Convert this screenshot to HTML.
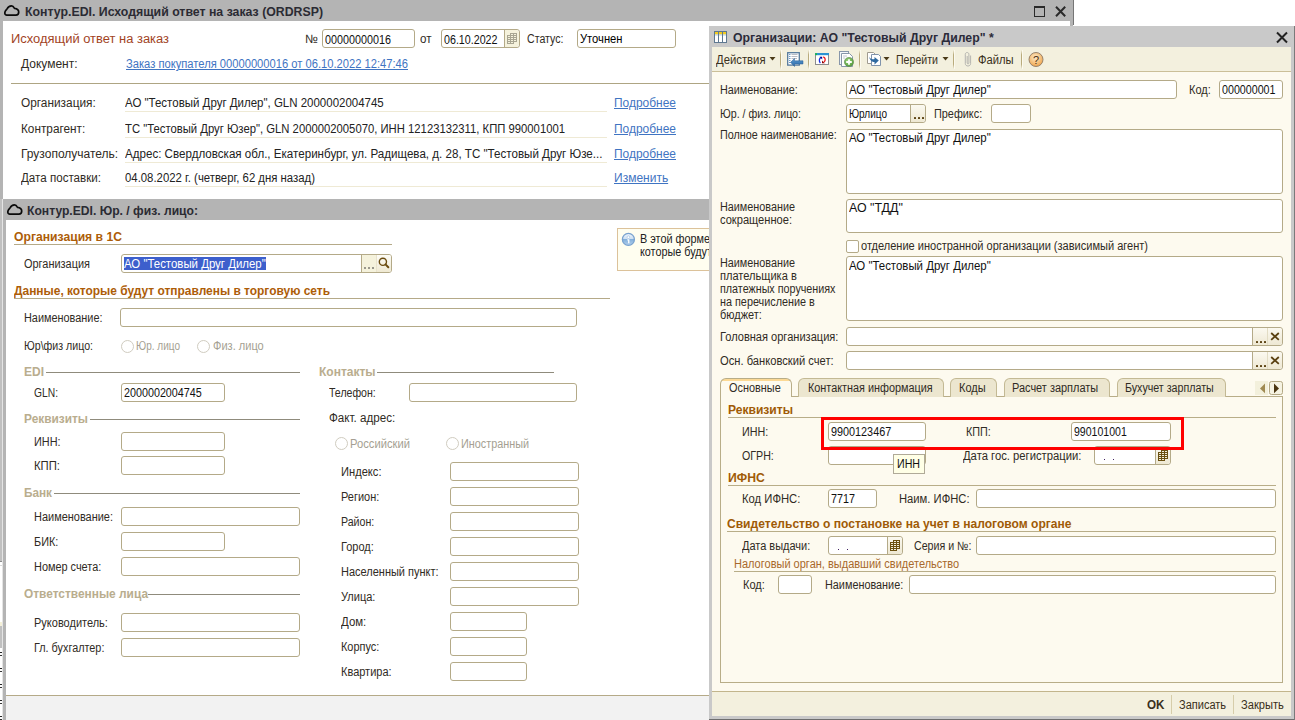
<!DOCTYPE html><html><head><meta charset='utf-8'><style>*{margin:0;padding:0}html,body{width:1295px;height:720px;overflow:hidden;background:#fff}
.t{position:absolute;white-space:pre;font-family:'Liberation Sans', sans-serif;transform-origin:0 0}
.r{position:absolute;box-sizing:border-box}</style></head><body><div class='r' style='left:0px;top:0px;width:1073px;height:200px;background:#b4b4b4;'></div><div class='r' style='left:1073px;top:0px;width:1px;height:25px;background:#767676;'></div><div class='r' style='left:3px;top:21px;width:1067px;height:179px;background:#ffffff;'></div><svg class='r' style='left:0px;top:0px' width='24' height='20' viewBox='0 0 24 20'><path d='M6.6 15.2 C5 15.2 4.6 13.6 4.9 12.2 C5.2 10.8 6.2 9.9 7 9 C8 6.9 9.6 5.9 11.5 5.9 C12.9 5.9 13.8 7 14.5 8.3 C17.2 8.6 18.7 10.2 18.7 12.1 C18.7 14 17.5 15.2 15.9 15.2 Z' fill='none' stroke='#0a0a0a' stroke-width='1.7' stroke-linejoin='round'/></svg><div class='t' style='left:25px;top:6px;font-size:12px;line-height:12px;color:#2b2b33;font-weight:bold;transform:scaleX(1.0258);'>Контур.EDI. Исходящий ответ на заказ (ORDRSP)</div><div class='r' style='left:1034px;top:6px;width:11px;height:11px;border:1.6px solid #2a2a2a;box-sizing:border-box;border-top-width:2.6px;'></div><svg class='r' style='left:1054px;top:5px' width='14' height='13' viewBox='0 0 14 13'><path d='M2 1.8 L11.2 11.2 M11.2 1.8 L2 11.2' stroke='#2a2a2a' stroke-width='2'/></svg><div class='t' style='left:11px;top:33px;font-size:12px;line-height:12px;color:#a2441f;transform:scaleX(1.0775);'>Исходящий ответ на заказ</div><div class='t' style='left:305px;top:33px;font-size:12px;line-height:12px;color:#302b24;transform:scaleX(1.0097);'>№</div><div class='r' style='left:322px;top:29px;width:93px;height:19px;background:#fff;border:1px solid #b4aa88;box-sizing:border-box;border-radius:3px;'></div><div class='t' style='left:325px;top:34px;font-size:12px;line-height:12px;color:#111;transform:scaleX(0.8989);'>00000000016</div><div class='t' style='left:420px;top:33px;font-size:12px;line-height:12px;color:#302b24;transform:scaleX(0.9659);'>от</div><div class='r' style='left:441px;top:29px;width:79px;height:19px;background:#fff;border:1px solid #b4aa88;box-sizing:border-box;border-radius:3px;'></div><div class='r' style='left:504px;top:30px;width:15px;height:17px;background:#f5f2dc;border-left:1px solid #b4aa88;border-radius:0 3px 3px 0;'></div><svg class='r' style='left:507px;top:33px' width='10' height='11' viewBox='0 0 10 11'><path d='M3 0 H10 V9 H7 V11 H0 V2 H3 Z' fill='#a8a592'/><rect x='4' y='1' width='2' height='1' fill='#f5f2dc'/><rect x='7' y='1' width='2' height='1' fill='#f5f2dc'/><rect x='1' y='3' width='2' height='1' fill='#f5f2dc'/><rect x='4' y='3' width='2' height='1' fill='#f5f2dc'/><rect x='7' y='3' width='2' height='1' fill='#f5f2dc'/><rect x='1' y='5' width='2' height='1' fill='#f5f2dc'/><rect x='4' y='5' width='2' height='1' fill='#f5f2dc'/><rect x='7' y='5' width='2' height='1' fill='#f5f2dc'/><rect x='1' y='7' width='2' height='1' fill='#f5f2dc'/><rect x='4' y='7' width='2' height='1' fill='#f5f2dc'/><rect x='7' y='7' width='2' height='1' fill='#f5f2dc'/><rect x='1' y='9' width='2' height='1' fill='#f5f2dc'/><rect x='4' y='9' width='2' height='1' fill='#f5f2dc'/></svg><div class='t' style='left:444px;top:34px;font-size:12px;line-height:12px;color:#111;transform:scaleX(0.8907);'>06.10.2022</div><div class='t' style='left:527px;top:33px;font-size:12px;line-height:12px;color:#302b24;transform:scaleX(0.8842);'>Статус:</div><div class='r' style='left:577px;top:29px;width:99px;height:19px;background:#fff;border:1px solid #b4aa88;box-sizing:border-box;border-radius:3px;'></div><div class='t' style='left:580px;top:33px;font-size:12px;line-height:12px;color:#000;transform:scaleX(0.9325);'>Уточнен</div><div class='t' style='left:21px;top:58px;font-size:12px;line-height:12px;color:#302b24;'>Документ:</div><div class='t' style='left:126px;top:58px;font-size:12px;line-height:12px;color:#3f74c2;text-decoration:underline;transform:scaleX(0.9312);'>Заказ покупателя 00000000016 от 06.10.2022 12:47:46</div><div class='r' style='left:11px;top:83px;width:698px;height:1px;background:#aea583;'></div><div class='t' style='left:21px;top:97px;font-size:12px;line-height:12px;color:#302b24;transform:scaleX(0.9872);'>Организация:</div><div class='t' style='left:125px;top:97px;font-size:12px;line-height:12px;color:#222;transform:scaleX(0.9572);'>АО "Тестовый Друг Дилер", GLN 2000002004745</div><div class='r' style='left:125px;top:111px;width:482px;height:1px;background:#efead5;'></div><div class='t' style='left:614px;top:97px;font-size:12px;line-height:12px;color:#3f74c2;text-decoration:underline;transform:scaleX(0.9962);'>Подробнее</div><div class='t' style='left:21px;top:123px;font-size:12px;line-height:12px;color:#302b24;transform:scaleX(0.9826);'>Контрагент:</div><div class='t' style='left:125px;top:123px;font-size:12px;line-height:12px;color:#222;transform:scaleX(0.9408);'>ТС "Тестовый Друг Юзер", GLN 2000002005070, ИНН 12123132311, КПП 990001001</div><div class='r' style='left:125px;top:137px;width:482px;height:1px;background:#efead5;'></div><div class='t' style='left:614px;top:123px;font-size:12px;line-height:12px;color:#3f74c2;text-decoration:underline;transform:scaleX(0.9962);'>Подробнее</div><div class='t' style='left:21px;top:148px;font-size:12px;line-height:12px;color:#302b24;'>Грузополучатель:</div><div class='t' style='left:125px;top:148px;font-size:12px;line-height:12px;color:#222;transform:scaleX(0.9658);'>Адрес: Свердловская обл., Екатеринбург, ул. Радищева, д. 28, ТС "Тестовый Друг Юзе...</div><div class='r' style='left:125px;top:162px;width:482px;height:1px;background:#efead5;'></div><div class='t' style='left:614px;top:148px;font-size:12px;line-height:12px;color:#3f74c2;text-decoration:underline;transform:scaleX(0.9962);'>Подробнее</div><div class='t' style='left:21px;top:172px;font-size:12px;line-height:12px;color:#302b24;transform:scaleX(0.9664);'>Дата поставки:</div><div class='t' style='left:125px;top:172px;font-size:12px;line-height:12px;color:#222;transform:scaleX(0.9469);'>04.08.2022 г. (четверг, 62 дня назад)</div><div class='r' style='left:125px;top:186px;width:482px;height:1px;background:#efead5;'></div><div class='t' style='left:614px;top:172px;font-size:12px;line-height:12px;color:#3f74c2;text-decoration:underline;'>Изменить</div><div class='r' style='left:0px;top:199px;width:2px;height:521px;background:#ffffff;'></div><div class='r' style='left:0px;top:199px;width:2px;height:362px;background:#c0c0c0;'></div><div class='r' style='left:0px;top:561px;width:2px;height:1px;background:#8a8a8a;'></div><div class='r' style='left:0px;top:565px;width:2px;height:1px;background:#d8d8d8;'></div><div class='r' style='left:0px;top:622px;width:2px;height:4px;background:#f4f0d8;'></div><div class='r' style='left:0px;top:626px;width:2px;height:22px;background:#c0c0c0;'></div><div class='r' style='left:0px;top:652px;width:2px;height:1px;background:#222222;'></div><div class='r' style='left:0px;top:655px;width:2px;height:1px;background:#333333;'></div><div class='r' style='left:0px;top:668px;width:2px;height:1px;background:#222222;'></div><div class='r' style='left:0px;top:671px;width:2px;height:1px;background:#333333;'></div><div class='r' style='left:0px;top:684px;width:2px;height:1px;background:#222222;'></div><div class='r' style='left:0px;top:687px;width:2px;height:1px;background:#333333;'></div><div class='r' style='left:0px;top:700px;width:2px;height:1px;background:#222222;'></div><div class='r' style='left:0px;top:703px;width:2px;height:1px;background:#333333;'></div><div class='r' style='left:0px;top:716px;width:2px;height:1px;background:#222222;'></div><div class='r' style='left:0px;top:719px;width:2px;height:1px;background:#333333;'></div><div class='r' style='left:2px;top:199px;width:1px;height:521px;background:#e4e4e4;'></div><div class='r' style='left:3px;top:199px;width:709px;height:521px;background:#b4b4b4;'></div><div class='r' style='left:6px;top:220px;width:706px;height:475px;background:#ffffff;'></div><div class='r' style='left:6px;top:695px;width:706px;height:1px;background:#b5aa88;'></div><div class='r' style='left:6px;top:696px;width:706px;height:24px;background:#f2f2f2;'></div><svg class='r' style='left:3px;top:199px' width='24' height='20' viewBox='0 0 24 20'><path d='M6.6 15.2 C5 15.2 4.6 13.6 4.9 12.2 C5.2 10.8 6.2 9.9 7 9 C8 6.9 9.6 5.9 11.5 5.9 C12.9 5.9 13.8 7 14.5 8.3 C17.2 8.6 18.7 10.2 18.7 12.1 C18.7 14 17.5 15.2 15.9 15.2 Z' fill='none' stroke='#0a0a0a' stroke-width='1.7' stroke-linejoin='round'/></svg><div class='t' style='left:27px;top:205px;font-size:12px;line-height:12px;color:#2b2b33;font-weight:bold;transform:scaleX(1.0107);'>Контур.EDI. Юр. / физ. лицо:</div><div class='t' style='left:14px;top:231px;font-size:12px;line-height:12px;color:#ad5d08;font-weight:bold;transform:scaleX(1.0132);'>Организация в 1С</div><div class='r' style='left:14px;top:244px;width:378px;height:1px;background:#b5aa88;'></div><div class='t' style='left:24px;top:258px;font-size:12px;line-height:12px;color:#302b24;transform:scaleX(0.9119);'>Организация</div><div class='r' style='left:121px;top:254px;width:271px;height:19px;background:#fff;border:1px solid #b4aa88;box-sizing:border-box;border-radius:3px;'></div><div class='r' style='left:361px;top:255px;width:15px;height:17px;background:#f5f2dc;border-left:1px solid #b4aa88;'></div><div class='r' style='left:364px;top:267px;width:2px;height:2px;background:#9a988c;'></div><div class='r' style='left:368px;top:267px;width:2px;height:2px;background:#9a988c;'></div><div class='r' style='left:372px;top:267px;width:2px;height:2px;background:#9a988c;'></div><div class='r' style='left:376px;top:255px;width:15px;height:17px;background:linear-gradient(#fdfcf6,#efe9d2);border-left:1px solid #e8e2cc;border-radius:0 2px 2px 0;'></div><svg class='r' style='left:376px;top:255px' width='15' height='17' viewBox='0 0 15 17'><circle cx='6.9' cy='6.8' r='3.6' fill='none' stroke='#6b4c10' stroke-width='1.4'/><path d='M9.5 9.4 L12.3 12.2' stroke='#6b4c10' stroke-width='2' stroke-linecap='round'/></svg><div class='r' style='left:124px;top:257px;width:142px;height:13px;background:#3d5fcc;'></div><div class='t' style='left:124px;top:258px;font-size:12px;line-height:12px;color:#ffffff;transform:scaleX(0.9517);'>АО "Тестовый Друг Дилер"</div><div class='t' style='left:14px;top:285px;font-size:12px;line-height:12px;color:#ad5d08;font-weight:bold;transform:scaleX(0.9948);'>Данные, которые будут отправлены в торговую сеть</div><div class='r' style='left:14px;top:298px;width:596px;height:1px;background:#b5aa88;'></div><div class='t' style='left:24px;top:312px;font-size:12px;line-height:12px;color:#302b24;transform:scaleX(0.9072);'>Наименование:</div><div class='r' style='left:120px;top:308px;width:457px;height:19px;background:#fff;border:1px solid #b4aa88;box-sizing:border-box;border-radius:3px;'></div><div class='t' style='left:24px;top:340px;font-size:12px;line-height:12px;color:#302b24;transform:scaleX(0.8846);'>Юр\физ лицо:</div><div class='r' style='left:121px;top:340px;width:13px;height:13px;border:1px solid #d0ccc0;border-radius:50%;box-sizing:border-box;background:#fff'></div><div class='t' style='left:136px;top:340px;font-size:12px;line-height:12px;color:#a59f92;transform:scaleX(0.8366);'>Юр. лицо</div><div class='r' style='left:197px;top:340px;width:13px;height:13px;border:1px solid #d0ccc0;border-radius:50%;box-sizing:border-box;background:#fff'></div><div class='t' style='left:213px;top:340px;font-size:12px;line-height:12px;color:#a59f92;transform:scaleX(0.9206);'>Физ. лицо</div><div class='r' style='left:617px;top:228px;width:95px;height:43px;background:#fffef0;border:1px solid #dcc29a;box-sizing:border-box;'></div><svg class='r' style='left:621px;top:232px' width='15' height='15' viewBox='0 0 15 15'><defs><linearGradient id='ig' x1='0' y1='0' x2='0' y2='1'><stop offset='0' stop-color='#eef5fc'/><stop offset='0.45' stop-color='#cfe0f2'/><stop offset='0.5' stop-color='#82b0dc'/><stop offset='1' stop-color='#b4d0ec'/></linearGradient></defs><circle cx='7.4' cy='7.4' r='6' fill='url(#ig)' stroke='#79a2cf' stroke-width='1.3'/><circle cx='7.4' cy='5.2' r='1.3' fill='#fff' stroke='#8fb4dc' stroke-width='0.5'/><path d='M6.3 7.3 H8.4 V11.3 H7.1 V8.4 H6.3 Z' fill='#fff'/></svg><div class='t' style='left:640px;top:233px;font-size:12px;line-height:12px;color:#222;transform:scaleX(0.9053);'>В этой форме указываются</div><div class='t' style='left:640px;top:246px;font-size:12px;line-height:12px;color:#222;transform:scaleX(0.9002);'>которые будут отправлены</div><div class='t' style='left:24px;top:366px;font-size:12px;line-height:12px;color:#b9ad8e;font-weight:bold;'>EDI</div><div class='r' style='left:46px;top:372px;width:254px;height:1px;background:#8f8b7c;'></div><div class='t' style='left:34px;top:387px;font-size:12px;line-height:12px;color:#302b24;transform:scaleX(0.8567);'>GLN:</div><div class='r' style='left:121px;top:383px;width:104px;height:19px;background:#fff;border:1px solid #b4aa88;box-sizing:border-box;border-radius:3px;'></div><div class='t' style='left:124px;top:387px;font-size:12px;line-height:12px;color:#111;transform:scaleX(0.8961);'>2000002004745</div><div class='t' style='left:24px;top:413px;font-size:12px;line-height:12px;color:#b9ad8e;font-weight:bold;transform:scaleX(0.9906);'>Реквизиты</div><div class='r' style='left:90px;top:419px;width:210px;height:1px;background:#8f8b7c;'></div><div class='t' style='left:34px;top:436px;font-size:12px;line-height:12px;color:#302b24;transform:scaleX(0.9045);'>ИНН:</div><div class='r' style='left:121px;top:432px;width:104px;height:19px;background:#fff;border:1px solid #b4aa88;box-sizing:border-box;border-radius:3px;'></div><div class='t' style='left:34px;top:460px;font-size:12px;line-height:12px;color:#302b24;transform:scaleX(0.9428);'>КПП:</div><div class='r' style='left:121px;top:456px;width:104px;height:19px;background:#fff;border:1px solid #b4aa88;box-sizing:border-box;border-radius:3px;'></div><div class='t' style='left:24px;top:487px;font-size:12px;line-height:12px;color:#b9ad8e;font-weight:bold;transform:scaleX(0.9803);'>Банк</div><div class='r' style='left:54px;top:493px;width:246px;height:1px;background:#8f8b7c;'></div><div class='t' style='left:34px;top:511px;font-size:12px;line-height:12px;color:#302b24;transform:scaleX(0.9130);'>Наименование:</div><div class='r' style='left:121px;top:507px;width:179px;height:19px;background:#fff;border:1px solid #b4aa88;box-sizing:border-box;border-radius:3px;'></div><div class='t' style='left:34px;top:536px;font-size:12px;line-height:12px;color:#302b24;transform:scaleX(0.9058);'>БИК:</div><div class='r' style='left:121px;top:532px;width:104px;height:19px;background:#fff;border:1px solid #b4aa88;box-sizing:border-box;border-radius:3px;'></div><div class='t' style='left:34px;top:561px;font-size:12px;line-height:12px;color:#302b24;transform:scaleX(0.9089);'>Номер счета:</div><div class='r' style='left:121px;top:557px;width:179px;height:19px;background:#fff;border:1px solid #b4aa88;box-sizing:border-box;border-radius:3px;'></div><div class='t' style='left:24px;top:588px;font-size:12px;line-height:12px;color:#b9ad8e;font-weight:bold;transform:scaleX(0.9915);'>Ответственные лица</div><div class='r' style='left:148px;top:594px;width:152px;height:1px;background:#8f8b7c;'></div><div class='t' style='left:34px;top:617px;font-size:12px;line-height:12px;color:#302b24;transform:scaleX(0.9162);'>Руководитель:</div><div class='r' style='left:121px;top:613px;width:179px;height:19px;background:#fff;border:1px solid #b4aa88;box-sizing:border-box;border-radius:3px;'></div><div class='t' style='left:34px;top:642px;font-size:12px;line-height:12px;color:#302b24;transform:scaleX(0.9033);'>Гл. бухгалтер:</div><div class='r' style='left:121px;top:638px;width:179px;height:19px;background:#fff;border:1px solid #b4aa88;box-sizing:border-box;border-radius:3px;'></div><div class='t' style='left:319px;top:366px;font-size:12px;line-height:12px;color:#b9ad8e;font-weight:bold;'>Контакты</div><div class='r' style='left:377px;top:372px;width:177px;height:1px;background:#8f8b7c;'></div><div class='t' style='left:329px;top:387px;font-size:12px;line-height:12px;color:#302b24;transform:scaleX(0.8800);'>Телефон:</div><div class='r' style='left:409px;top:383px;width:168px;height:19px;background:#fff;border:1px solid #b4aa88;box-sizing:border-box;border-radius:3px;'></div><div class='t' style='left:329px;top:412px;font-size:12px;line-height:12px;color:#302b24;transform:scaleX(0.9689);'>Факт. адрес:</div><div class='r' style='left:335px;top:437px;width:13px;height:13px;border:1px solid #d0ccc0;border-radius:50%;box-sizing:border-box;background:#fff'></div><div class='t' style='left:350px;top:438px;font-size:12px;line-height:12px;color:#a59f92;transform:scaleX(0.9343);'>Российский</div><div class='r' style='left:446px;top:437px;width:13px;height:13px;border:1px solid #d0ccc0;border-radius:50%;box-sizing:border-box;background:#fff'></div><div class='t' style='left:461px;top:438px;font-size:12px;line-height:12px;color:#a59f92;transform:scaleX(0.9023);'>Иностранный</div><div class='t' style='left:341px;top:466px;font-size:12px;line-height:12px;color:#302b24;transform:scaleX(0.9277);'>Индекс:</div><div class='r' style='left:450px;top:462px;width:129px;height:19px;background:#fff;border:1px solid #b4aa88;box-sizing:border-box;border-radius:3px;'></div><div class='t' style='left:341px;top:491px;font-size:12px;line-height:12px;color:#302b24;transform:scaleX(0.9134);'>Регион:</div><div class='r' style='left:450px;top:487px;width:129px;height:19px;background:#fff;border:1px solid #b4aa88;box-sizing:border-box;border-radius:3px;'></div><div class='t' style='left:341px;top:516px;font-size:12px;line-height:12px;color:#302b24;transform:scaleX(0.8837);'>Район:</div><div class='r' style='left:450px;top:512px;width:129px;height:19px;background:#fff;border:1px solid #b4aa88;box-sizing:border-box;border-radius:3px;'></div><div class='t' style='left:341px;top:541px;font-size:12px;line-height:12px;color:#302b24;transform:scaleX(0.9163);'>Город:</div><div class='r' style='left:450px;top:537px;width:129px;height:19px;background:#fff;border:1px solid #b4aa88;box-sizing:border-box;border-radius:3px;'></div><div class='t' style='left:341px;top:566px;font-size:12px;line-height:12px;color:#302b24;transform:scaleX(0.9160);'>Населенный пункт:</div><div class='r' style='left:450px;top:562px;width:129px;height:19px;background:#fff;border:1px solid #b4aa88;box-sizing:border-box;border-radius:3px;'></div><div class='t' style='left:341px;top:591px;font-size:12px;line-height:12px;color:#302b24;transform:scaleX(0.9196);'>Улица:</div><div class='r' style='left:450px;top:587px;width:129px;height:19px;background:#fff;border:1px solid #b4aa88;box-sizing:border-box;border-radius:3px;'></div><div class='t' style='left:341px;top:616px;font-size:12px;line-height:12px;color:#302b24;transform:scaleX(0.9536);'>Дом:</div><div class='r' style='left:450px;top:612px;width:77px;height:19px;background:#fff;border:1px solid #b4aa88;box-sizing:border-box;border-radius:3px;'></div><div class='t' style='left:341px;top:641px;font-size:12px;line-height:12px;color:#302b24;transform:scaleX(0.9109);'>Корпус:</div><div class='r' style='left:450px;top:637px;width:77px;height:19px;background:#fff;border:1px solid #b4aa88;box-sizing:border-box;border-radius:3px;'></div><div class='t' style='left:341px;top:666px;font-size:12px;line-height:12px;color:#302b24;transform:scaleX(0.9166);'>Квартира:</div><div class='r' style='left:450px;top:662px;width:77px;height:19px;background:#fff;border:1px solid #b4aa88;box-sizing:border-box;border-radius:3px;'></div><div class='r' style='left:709px;top:26px;width:586px;height:694px;background:#c9c9c9;'></div><div class='r' style='left:709px;top:719px;width:586px;height:1px;background:#6e6e6e;'></div><div class='r' style='left:1294px;top:26px;width:1px;height:694px;background:#7a7a7a;'></div><div class='r' style='left:712px;top:47px;width:579px;height:669px;background:#fdfaef;'></div><div class='r' style='left:712px;top:47px;width:579px;height:24px;background:#f3f0de;'></div><div class='r' style='left:712px;top:71px;width:579px;height:1px;background:#cbbf98;'></div><svg class='r' style='left:714px;top:31px' width='13' height='12' viewBox='0 0 13 12'><rect x='0.5' y='0.5' width='12' height='11' fill='#fff' stroke='#5f7890'/><rect x='1' y='1' width='11' height='2.5' fill='#f3cc20'/><rect x='1' y='3.5' width='11' height='1' fill='#b4cde6'/><path d='M4.5 1 V11.5 M8.5 1 V11.5' stroke='#5f7890'/></svg><div class='t' style='left:733px;top:32px;font-size:12px;line-height:12px;color:#2b2b3a;font-weight:bold;transform:scaleX(1.0228);'>Организации: АО "Тестовый Друг Дилер" *</div><svg class='r' style='left:1276px;top:31px' width='12' height='13' viewBox='0 0 12 13'><path d='M1 1.5 L11 11.5 M11 1.5 L1 11.5' stroke='#222' stroke-width='2'/></svg><div class='t' style='left:716px;top:54px;font-size:12px;line-height:12px;color:#3a3020;transform:scaleX(0.9415);'>Действия</div><svg class='r' style='left:712px;top:47px' width='579' height='24' viewBox='712 47 579 24'><defs><linearGradient id='sepg' x1='0' y1='0' x2='0' y2='1'><stop offset='0' stop-color='#f3f0de'/><stop offset='0.25' stop-color='#b9ab7c'/><stop offset='0.75' stop-color='#b9ab7c'/><stop offset='1' stop-color='#f3f0de'/></linearGradient>
<linearGradient id='arrg' x1='0' y1='0' x2='0' y2='1'><stop offset='0' stop-color='#5a9ad0'/><stop offset='1' stop-color='#2d6aa8'/></linearGradient>
<radialGradient id='grg' cx='0.4' cy='0.35' r='0.7'><stop offset='0' stop-color='#9ad27a'/><stop offset='1' stop-color='#4f9a3a'/></radialGradient></defs>
<rect x='780' y='50' width='1' height='19' fill='url(#sepg)'/><rect x='781' y='50' width='1' height='19' fill='#fffef6' opacity='0.7'/><rect x='808' y='50' width='1' height='19' fill='url(#sepg)'/><rect x='809' y='50' width='1' height='19' fill='#fffef6' opacity='0.7'/><rect x='859' y='50' width='1' height='19' fill='url(#sepg)'/><rect x='860' y='50' width='1' height='19' fill='#fffef6' opacity='0.7'/><rect x='953' y='50' width='1' height='19' fill='url(#sepg)'/><rect x='954' y='50' width='1' height='19' fill='#fffef6' opacity='0.7'/><rect x='1021' y='50' width='1' height='19' fill='url(#sepg)'/><rect x='1022' y='50' width='1' height='19' fill='#fffef6' opacity='0.7'/>
<path d='M769.5 57 H775.5 L772.5 60.5 Z' fill='#4a3a18'/>
<rect x='787.7' y='52.7' width='11.6' height='12.4' fill='#fff' stroke='#557a9c' stroke-width='1.3'/>
<g stroke-width='1'><path d='M789 54.5 H790.5 M789 56.5 H790.5 M789 58.5 H790.5 M789 60.5 H790.5 M789 62.5 H790.5' stroke='#6d9bc8'/><path d='M791.5 54.5 H797.5 M791.5 56.5 H797.5 M791.5 58.5 H797' stroke='#b8bcc4'/></g>
<path d='M803 60.8 H794.5 V58.5 L790.5 62.3 L794.5 66.5 V64 H803 Z' fill='url(#arrg)' stroke='#2a5f95' stroke-width='0.5'/>
<rect x='815.5' y='53.5' width='13' height='11' fill='#fff' stroke='#8c8c8c' stroke-width='1'/>
<rect x='815' y='53' width='14' height='2.2' fill='#2a93d2'/><rect x='815.3' y='53.3' width='1.6' height='1.8' fill='#22c022'/>
<path d='M821.2 57.5 C819 58 818.8 61.5 820.4 63' stroke='#1a2ee0' stroke-width='1.3' fill='none'/><path d='M819.6 56.8 H822.2 V59.4 Z' fill='#000a8a'/>
<path d='M823.2 56.8 C825.6 57.5 825.8 60.5 824 62' stroke='#f01818' stroke-width='1.3' fill='none'/><path d='M822 60.5 V63.2 H824.8 Z' fill='#8a0000'/>
<rect x='839.5' y='51.5' width='9' height='13' fill='#f4f7fb' stroke='#8796aa' stroke-width='1'/>
<path d='M841.5 53.5 H849.5 L852.5 56.5 V66.5 H841.5 Z' fill='#fff' stroke='#8796aa' stroke-width='1'/>
<path d='M843 56 H847 M843 58 H845' stroke='#b0b8c4' stroke-width='0.8'/>
<circle cx='849' cy='62' r='4.6' fill='url(#grg)' stroke='#5f8a50' stroke-width='0.6'/>
<path d='M849 59.2 V64.8 M846.2 62 H851.8' stroke='#fff' stroke-width='1.8'/>
<path d='M867.5 52.5 H873.5 L875 54 V63.5 H867.5 Z' fill='#fff' stroke='#a09c90' stroke-width='1'/>
<path d='M871.5 54.5 H878.5 L880.5 56.5 V65.5 H871.5 Z' fill='#fff' stroke='#7f93ab' stroke-width='1'/>
<path d='M869 56.5 C870 59 872 59.5 874.5 59 V57 L878.8 60.5 L874.5 64.5 V62 C872 62 870 60.5 869 56.5 Z' fill='#2f6aa0'/>
<path d='M883.5 57 H889.5 L886.5 60.5 Z' fill='#4a3a18'/>
<path d='M942.5 57 H948.5 L945.5 60.5 Z' fill='#4a3a18'/>
<path d='M967.2 56 V63 C967.2 64.2 968.9 64.2 968.9 63 V54.3 C968.9 51.9 965.3 51.9 965.3 54.3 V63.6 C965.3 66.8 970.6 66.8 970.6 63.6 V55.5' stroke='#aeaeaa' stroke-width='0.9' fill='none'/>
</svg><div class='t' style='left:896px;top:54px;font-size:12px;line-height:12px;color:#3a3020;transform:scaleX(0.8830);'>Перейти</div><div class='t' style='left:978px;top:54px;font-size:12px;line-height:12px;color:#3a3020;transform:scaleX(0.9334);'>Файлы</div><svg class='r' style='left:1028px;top:52px' width='16' height='16' viewBox='0 0 16 16'><defs><radialGradient id='hg' cx='0.45' cy='0.35' r='0.7'><stop offset='0' stop-color='#fdebc8'/><stop offset='1' stop-color='#eea044'/></radialGradient></defs><circle cx='8' cy='7.5' r='7' fill='url(#hg)' stroke='#8d7a66' stroke-width='0.9'/><text x='8' y='11.5' text-anchor='middle' font-family='Liberation Sans' font-size='11' fill='#4a3015'>?</text></svg><div class='t' style='left:720px;top:84px;font-size:12px;line-height:12px;color:#302b24;transform:scaleX(0.8991);'>Наименование:</div><div class='r' style='left:846px;top:80px;width:331px;height:19px;background:#fff;border:1px solid #b4aa88;box-sizing:border-box;border-radius:3px;'></div><div class='t' style='left:849px;top:84px;font-size:12px;line-height:12px;color:#111;transform:scaleX(0.9517);'>АО "Тестовый Друг Дилер"</div><div class='t' style='left:1189px;top:84px;font-size:12px;line-height:12px;color:#302b24;transform:scaleX(0.9179);'>Код:</div><div class='r' style='left:1219px;top:80px;width:64px;height:19px;background:#fff;border:1px solid #b4aa88;box-sizing:border-box;border-radius:3px;'></div><div class='t' style='left:1222px;top:84px;font-size:12px;line-height:12px;color:#111;transform:scaleX(0.8905);'>000000001</div><div class='t' style='left:720px;top:108px;font-size:12px;line-height:12px;color:#302b24;transform:scaleX(0.8868);'>Юр. / физ. лицо:</div><div class='r' style='left:846px;top:104px;width:80px;height:19px;background:#fff;border:1px solid #b4aa88;box-sizing:border-box;border-radius:3px;'></div><div class='r' style='left:910px;top:105px;width:15px;height:17px;background:linear-gradient(#fbf9f0,#eee8d3);border-left:1px solid #b4aa88;border-radius:0 3px 3px 0;'></div><div class='r' style='left:914px;top:117px;width:2px;height:2px;background:#5a4010;border-radius:0.5px;'></div><div class='r' style='left:918px;top:117px;width:2px;height:2px;background:#5a4010;border-radius:0.5px;'></div><div class='r' style='left:922px;top:117px;width:2px;height:2px;background:#5a4010;border-radius:0.5px;'></div><div class='t' style='left:849px;top:108px;font-size:12px;line-height:12px;color:#111;transform:scaleX(0.8349);'>Юрлицо</div><div class='t' style='left:934px;top:108px;font-size:12px;line-height:12px;color:#302b24;transform:scaleX(0.9046);'>Префикс:</div><div class='r' style='left:991px;top:104px;width:40px;height:19px;background:#fff;border:1px solid #b4aa88;box-sizing:border-box;border-radius:3px;'></div><div class='t' style='left:720px;top:129px;font-size:12px;line-height:12px;color:#302b24;transform:scaleX(0.8989);'>Полное наименование:</div><div class='r' style='left:846px;top:129px;width:437px;height:65px;background:#fff;border:1px solid #b4aa88;box-sizing:border-box;border-radius:3px;'></div><div class='t' style='left:849px;top:132px;font-size:12px;line-height:12px;color:#111;transform:scaleX(0.9517);'>АО "Тестовый Друг Дилер"</div><div class='t' style='left:720px;top:201px;font-size:12px;line-height:12px;color:#302b24;transform:scaleX(0.9016);'>Наименование</div><div class='t' style='left:720px;top:214px;font-size:12px;line-height:12px;color:#302b24;transform:scaleX(0.9259);'>сокращенное:</div><div class='r' style='left:846px;top:199px;width:437px;height:34px;background:#fff;border:1px solid #b4aa88;box-sizing:border-box;border-radius:3px;'></div><div class='t' style='left:849px;top:202px;font-size:12px;line-height:12px;color:#111;transform:scaleX(1.0321);'>АО "ТДД"</div><div class='r' style='left:846px;top:240px;width:13px;height:13px;background:#fff;border:1px solid #b4aa88;box-sizing:border-box;border-radius:2px;'></div><div class='t' style='left:861px;top:240px;font-size:12px;line-height:12px;color:#302b24;transform:scaleX(0.9190);'>отделение иностранной организации (зависимый агент)</div><div class='t' style='left:720px;top:257px;font-size:12px;line-height:12px;color:#302b24;transform:scaleX(0.9016);'>Наименование</div><div class='t' style='left:720px;top:270px;font-size:12px;line-height:12px;color:#302b24;transform:scaleX(0.9222);'>плательщика в</div><div class='t' style='left:720px;top:283px;font-size:12px;line-height:12px;color:#302b24;transform:scaleX(0.8961);'>платежных поручениях</div><div class='t' style='left:720px;top:296px;font-size:12px;line-height:12px;color:#302b24;transform:scaleX(0.9019);'>на перечисление в</div><div class='t' style='left:720px;top:309px;font-size:12px;line-height:12px;color:#302b24;transform:scaleX(0.9137);'>бюджет:</div><div class='r' style='left:846px;top:256px;width:437px;height:65px;background:#fff;border:1px solid #b4aa88;box-sizing:border-box;border-radius:3px;'></div><div class='t' style='left:849px;top:260px;font-size:12px;line-height:12px;color:#111;transform:scaleX(0.9517);'>АО "Тестовый Друг Дилер"</div><div class='t' style='left:720px;top:331px;font-size:12px;line-height:12px;color:#302b24;transform:scaleX(0.9215);'>Головная организация:</div><div class='r' style='left:846px;top:327px;width:437px;height:19px;background:#fff;border:1px solid #b4aa88;box-sizing:border-box;border-radius:3px;'></div><div class='r' style='left:1252px;top:328px;width:15px;height:17px;background:linear-gradient(#fbf9f0,#eee8d3);border-left:1px solid #b4aa88;'></div><div class='r' style='left:1267px;top:328px;width:15px;height:17px;background:linear-gradient(#fbf9f0,#eee8d3);border-left:1px solid #e2dcc4;border-radius:0 3px 3px 0;'></div><div class='r' style='left:1256px;top:341px;width:2px;height:2px;background:#5a4010;border-radius:0.5px;'></div><div class='r' style='left:1260px;top:341px;width:2px;height:2px;background:#5a4010;border-radius:0.5px;'></div><div class='r' style='left:1264px;top:341px;width:2px;height:2px;background:#5a4010;border-radius:0.5px;'></div><svg class='r' style='left:1270px;top:332px' width='10' height='9' viewBox='0 0 10 9'><path d='M1.2 1 L8.8 7.8 M8.8 1 L1.2 7.8' stroke='#5a4010' stroke-width='1.8'/></svg><div class='t' style='left:720px;top:355px;font-size:12px;line-height:12px;color:#302b24;transform:scaleX(0.9316);'>Осн. банковский счет:</div><div class='r' style='left:846px;top:351px;width:437px;height:19px;background:#fff;border:1px solid #b4aa88;box-sizing:border-box;border-radius:3px;'></div><div class='r' style='left:1252px;top:352px;width:15px;height:17px;background:linear-gradient(#fbf9f0,#eee8d3);border-left:1px solid #b4aa88;'></div><div class='r' style='left:1267px;top:352px;width:15px;height:17px;background:linear-gradient(#fbf9f0,#eee8d3);border-left:1px solid #e2dcc4;border-radius:0 3px 3px 0;'></div><div class='r' style='left:1256px;top:365px;width:2px;height:2px;background:#5a4010;border-radius:0.5px;'></div><div class='r' style='left:1260px;top:365px;width:2px;height:2px;background:#5a4010;border-radius:0.5px;'></div><div class='r' style='left:1264px;top:365px;width:2px;height:2px;background:#5a4010;border-radius:0.5px;'></div><svg class='r' style='left:1270px;top:356px' width='10' height='9' viewBox='0 0 10 9'><path d='M1.2 1 L8.8 7.8 M8.8 1 L1.2 7.8' stroke='#5a4010' stroke-width='1.8'/></svg><div class='r' style='left:720px;top:396px;width:563px;height:287px;background:#fdfaef;border:1px solid #b8ad88;box-sizing:border-box;'></div><div class='r' style='left:798px;top:378px;width:146px;height:19px;background:#ece6cf;border:1px solid #c3b994;box-sizing:border-box;border-bottom:none;border-radius:6px 6px 0 0;'></div><div class='t' style='left:807.5px;top:382px;font-size:12px;line-height:12px;color:#302b24;transform:scaleX(0.9043);'>Контактная информация</div><div class='r' style='left:950px;top:378px;width:47px;height:19px;background:#ece6cf;border:1px solid #c3b994;box-sizing:border-box;border-bottom:none;border-radius:6px 6px 0 0;'></div><div class='t' style='left:959px;top:382px;font-size:12px;line-height:12px;color:#302b24;transform:scaleX(0.9163);'>Коды</div><div class='r' style='left:1004px;top:378px;width:106px;height:19px;background:#ece6cf;border:1px solid #c3b994;box-sizing:border-box;border-bottom:none;border-radius:6px 6px 0 0;'></div><div class='t' style='left:1012px;top:382px;font-size:12px;line-height:12px;color:#302b24;transform:scaleX(0.9132);'>Расчет зарплаты</div><div class='r' style='left:1117px;top:378px;width:109px;height:19px;background:#ece6cf;border:1px solid #c3b994;box-sizing:border-box;border-bottom:none;border-radius:6px 6px 0 0;'></div><div class='t' style='left:1125px;top:382px;font-size:12px;line-height:12px;color:#302b24;transform:scaleX(0.8882);'>Бухучет зарплаты</div><div class='r' style='left:720px;top:378px;width:72px;height:19px;background:linear-gradient(#fcd995 0px,#fcd995 2px,#fdfaef 2px);border:1px solid #b8ad88;box-sizing:border-box;border-bottom:none;border-radius:6px 6px 0 0;'></div><div class='t' style='left:729px;top:382px;font-size:12px;line-height:12px;color:#302b24;transform:scaleX(0.9080);'>Основные</div><svg class='r' style='left:1250px;top:376px' width='40' height='24' viewBox='1250 376 40 24'><rect x='1255' y='381' width='13' height='14' fill='#f3f0dc'/><path d='M1265 383.6 V393.2 L1260 388.4 Z' fill='#a08a52'/><rect x='1269.5' y='381.5' width='13' height='13' rx='2' fill='#f6f3e2' stroke='#b3a884'/><path d='M1274 383.6 V393.2 L1279 388.4 Z' fill='#4a3510'/></svg><div class='t' style='left:728px;top:404px;font-size:12px;line-height:12px;color:#a05a06;font-weight:bold;transform:scaleX(1.0060);'>Реквизиты</div><div class='r' style='left:728px;top:417px;width:548px;height:1px;background:#b8ad88;'></div><div class='t' style='left:742px;top:426px;font-size:12px;line-height:12px;color:#302b24;transform:scaleX(0.8943);'>ИНН:</div><div class='r' style='left:828px;top:422px;width:98px;height:19px;background:#fff;border:1px solid #b4aa88;box-sizing:border-box;border-radius:3px;'></div><div class='t' style='left:831px;top:426px;font-size:12px;line-height:12px;color:#111;transform:scaleX(0.9019);'>9900123467</div><div class='t' style='left:966px;top:426px;font-size:12px;line-height:12px;color:#302b24;transform:scaleX(0.8993);'>КПП:</div><div class='r' style='left:1071px;top:422px;width:100px;height:19px;background:#fff;border:1px solid #b4aa88;box-sizing:border-box;border-radius:3px;'></div><div class='t' style='left:1074px;top:426px;font-size:12px;line-height:12px;color:#111;transform:scaleX(0.8789);'>990101001</div><div class='t' style='left:742px;top:450px;font-size:12px;line-height:12px;color:#302b24;transform:scaleX(0.8872);'>ОГРН:</div><div class='r' style='left:828px;top:446px;width:98px;height:19px;background:#fff;border:1px solid #b4aa88;box-sizing:border-box;border-radius:3px;'></div><div class='t' style='left:963px;top:450px;font-size:12px;line-height:12px;color:#302b24;transform:scaleX(0.9378);'>Дата гос. регистрации:</div><div class='r' style='left:1094px;top:446px;width:77px;height:19px;background:#fff;border:1px solid #b4aa88;box-sizing:border-box;border-radius:3px;'></div><div class='r' style='left:1155px;top:447px;width:15px;height:17px;background:linear-gradient(#fbf9f0,#eee8d3);border-left:1px solid #b4aa88;border-radius:0 3px 3px 0;'></div><svg class='r' style='left:1158px;top:450px' width='10' height='11' viewBox='0 0 10 11'><path d='M3 0 H10 V9 H7 V11 H0 V2 H3 Z' fill='#6b5010'/><rect x='4' y='1' width='2' height='1' fill='#f3efdc'/><rect x='7' y='1' width='2' height='1' fill='#f3efdc'/><rect x='1' y='3' width='2' height='1' fill='#f3efdc'/><rect x='4' y='3' width='2' height='1' fill='#f3efdc'/><rect x='7' y='3' width='2' height='1' fill='#f3efdc'/><rect x='1' y='5' width='2' height='1' fill='#f3efdc'/><rect x='4' y='5' width='2' height='1' fill='#f3efdc'/><rect x='7' y='5' width='2' height='1' fill='#f3efdc'/><rect x='1' y='7' width='2' height='1' fill='#f3efdc'/><rect x='4' y='7' width='2' height='1' fill='#f3efdc'/><rect x='7' y='7' width='2' height='1' fill='#f3efdc'/><rect x='1' y='9' width='2' height='1' fill='#f3efdc'/><rect x='4' y='9' width='2' height='1' fill='#f3efdc'/></svg><div class='r' style='left:1104px;top:459px;width:1px;height:1px;background:#402060;'></div><div class='r' style='left:1113px;top:459px;width:1px;height:1px;background:#402060;'></div><div class='r' style='left:821px;top:417px;width:363px;height:33px;border:3px solid #ff0000;box-sizing:border-box;'></div><div class='r' style='left:893px;top:454px;width:32px;height:20px;background:#ffffe6;border:1px solid #b0aa98;box-sizing:border-box;'></div><div class='t' style='left:897px;top:458px;font-size:12px;line-height:12px;color:#111;transform:scaleX(0.8857);'>ИНН</div><div class='t' style='left:728px;top:472px;font-size:12px;line-height:12px;color:#a05a06;font-weight:bold;transform:scaleX(1.0165);'>ИФНС</div><div class='r' style='left:728px;top:485px;width:548px;height:1px;background:#b8ad88;'></div><div class='t' style='left:742px;top:493px;font-size:12px;line-height:12px;color:#302b24;transform:scaleX(0.9396);'>Код ИФНС:</div><div class='r' style='left:828px;top:489px;width:49px;height:19px;background:#fff;border:1px solid #b4aa88;box-sizing:border-box;border-radius:3px;'></div><div class='t' style='left:831px;top:493px;font-size:12px;line-height:12px;color:#111;transform:scaleX(0.8950);'>7717</div><div class='t' style='left:899px;top:493px;font-size:12px;line-height:12px;color:#302b24;transform:scaleX(0.9353);'>Наим. ИФНС:</div><div class='r' style='left:976px;top:489px;width:300px;height:19px;background:#fff;border:1px solid #b4aa88;box-sizing:border-box;border-radius:3px;'></div><div class='t' style='left:727px;top:518px;font-size:12px;line-height:12px;color:#a05a06;font-weight:bold;transform:scaleX(1.0047);'>Свидетельство о постановке на учет в налоговом органе</div><div class='r' style='left:727px;top:531px;width:549px;height:1px;background:#b8ad88;'></div><div class='t' style='left:742px;top:540px;font-size:12px;line-height:12px;color:#302b24;transform:scaleX(0.9141);'>Дата выдачи:</div><div class='r' style='left:828px;top:536px;width:75px;height:19px;background:#fff;border:1px solid #b4aa88;box-sizing:border-box;border-radius:3px;'></div><div class='r' style='left:887px;top:537px;width:15px;height:17px;background:linear-gradient(#fbf9f0,#eee8d3);border-left:1px solid #b4aa88;border-radius:0 3px 3px 0;'></div><svg class='r' style='left:890px;top:540px' width='10' height='11' viewBox='0 0 10 11'><path d='M3 0 H10 V9 H7 V11 H0 V2 H3 Z' fill='#6b5010'/><rect x='4' y='1' width='2' height='1' fill='#f3efdc'/><rect x='7' y='1' width='2' height='1' fill='#f3efdc'/><rect x='1' y='3' width='2' height='1' fill='#f3efdc'/><rect x='4' y='3' width='2' height='1' fill='#f3efdc'/><rect x='7' y='3' width='2' height='1' fill='#f3efdc'/><rect x='1' y='5' width='2' height='1' fill='#f3efdc'/><rect x='4' y='5' width='2' height='1' fill='#f3efdc'/><rect x='7' y='5' width='2' height='1' fill='#f3efdc'/><rect x='1' y='7' width='2' height='1' fill='#f3efdc'/><rect x='4' y='7' width='2' height='1' fill='#f3efdc'/><rect x='7' y='7' width='2' height='1' fill='#f3efdc'/><rect x='1' y='9' width='2' height='1' fill='#f3efdc'/><rect x='4' y='9' width='2' height='1' fill='#f3efdc'/></svg><div class='r' style='left:838px;top:549px;width:1px;height:1px;background:#402060;'></div><div class='r' style='left:847px;top:549px;width:1px;height:1px;background:#402060;'></div><div class='t' style='left:914px;top:540px;font-size:12px;line-height:12px;color:#302b24;transform:scaleX(0.8874);'>Серия и №:</div><div class='r' style='left:976px;top:536px;width:300px;height:19px;background:#fff;border:1px solid #b4aa88;box-sizing:border-box;border-radius:3px;'></div><div class='t' style='left:734px;top:558px;font-size:12px;line-height:12px;color:#a8692c;transform:scaleX(0.9174);'>Налоговый орган, выдавший свидетельство</div><div class='r' style='left:734px;top:571px;width:542px;height:1px;background:#b8ad88;'></div><div class='t' style='left:743px;top:579px;font-size:12px;line-height:12px;color:#302b24;transform:scaleX(0.9179);'>Код:</div><div class='r' style='left:778px;top:575px;width:34px;height:19px;background:#fff;border:1px solid #b4aa88;box-sizing:border-box;border-radius:3px;'></div><div class='t' style='left:825px;top:579px;font-size:12px;line-height:12px;color:#302b24;transform:scaleX(0.9037);'>Наименование:</div><div class='r' style='left:909px;top:575px;width:367px;height:19px;background:#fff;border:1px solid #b4aa88;box-sizing:border-box;border-radius:3px;'></div><div class='r' style='left:712px;top:691px;width:579px;height:25px;background:#f3f0de;'></div><div class='r' style='left:712px;top:691px;width:579px;height:1px;background:#c2b58c;'></div><div class='t' style='left:1147px;top:699px;font-size:12px;line-height:12px;color:#3a3020;font-weight:bold;transform:scaleX(0.9722);'>OK</div><div class='r' style='left:1171px;top:695px;width:1px;height:19px;background:#d6cdaa;'></div><div class='t' style='left:1179px;top:699px;font-size:12px;line-height:12px;color:#3a3020;transform:scaleX(0.9185);'>Записать</div><div class='r' style='left:1233px;top:695px;width:1px;height:19px;background:#d6cdaa;'></div><div class='t' style='left:1241px;top:699px;font-size:12px;line-height:12px;color:#3a3020;transform:scaleX(0.9282);'>Закрыть</div></body></html>
